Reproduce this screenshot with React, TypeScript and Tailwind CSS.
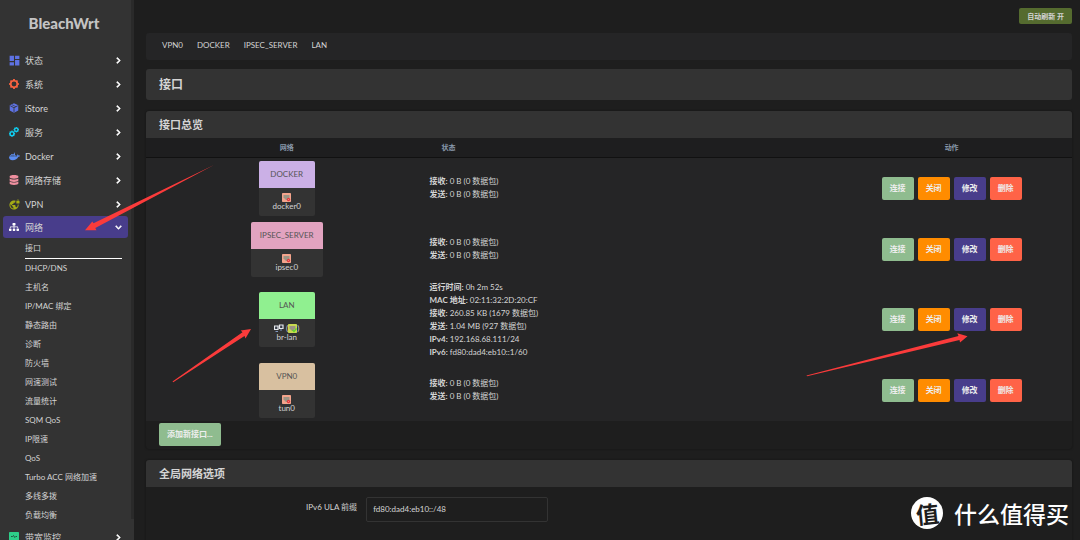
import React from "react";
import { MdDashboard, MdVpnLock } from "react-icons/md";
import { FaChevronDown, FaChevronRight, FaDatabase, FaDocker, FaSitemap } from "react-icons/fa";

function gearPath(cx: number, cy: number, outer: number, inner: number, teeth: number) {
  const step = (Math.PI * 2) / teeth;
  const points: string[] = [];
  for (let i = 0; i < teeth; i++) {
    const a = i * step - Math.PI / 2;
    const corners: [number, number][] = [
      [inner, a - step * 0.32],
      [outer, a - step * 0.2],
      [outer, a + step * 0.2],
      [inner, a + step * 0.32],
    ];
    for (const [r, t] of corners) {
      points.push(`${(cx + r * Math.cos(t)).toFixed(2)},${(cy + r * Math.sin(t)).toFixed(2)}`);
    }
  }
  return `M${points.join("L")}Z`;
}

function hole(cx: number, cy: number, r: number) {
  return `M${cx - r},${cy}a${r},${r} 0 1,0 ${r * 2},0a${r},${r} 0 1,0 ${-r * 2},0Z`;
}

function GearIcon() {
  return (
    <svg viewBox="0 0 20 20" className="size-[10px] text-[#fb6340]" fill="currentColor" aria-hidden="true">
      <path fillRule="evenodd" d={gearPath(10, 10, 10, 8.4, 8) + hole(10, 10, 4.9)} />
    </svg>
  );
}

function CubeIcon() {
  return (
    <svg viewBox="0 0 20 20" className="size-[10px]" aria-hidden="true">
      <path d="M10 0.500L18.500 4.500V15L10 19.500L1.500 15V4.500Z" fill="#5e72e4" />
      <path d="M2.500 5.500L10 9.500L17.500 5.500M10 9.500V18.500" fill="none" stroke="#333" strokeWidth="1.6" />
      <path d="M6 3.500L14 7.500" fill="none" stroke="#333" strokeWidth="1.2" />
    </svg>
  );
}

function GearsIcon() {
  return (
    <svg viewBox="0 0 20 20" className="size-[10px] text-[#11cdef]" fill="currentColor" aria-hidden="true">
      <path fillRule="evenodd" d={gearPath(6, 13.5, 6.4, 5.4, 8) + hole(6, 13.5, 2.4)} />
      <path fillRule="evenodd" d={gearPath(14.6, 5.4, 5.6, 4.7, 8) + hole(14.6, 5.4, 2)} />
    </svg>
  );
}

function MonitorIcon() {
  return (
    <svg viewBox="0 0 20 20" className="size-[10px]" aria-hidden="true">
      <rect width="20" height="20" rx="1.5" fill="#2dce89" />
      <path d="M4 9h3l2-2 2.5 4L13.500 9H16" fill="none" stroke="#1f4a3a" strokeWidth="1.8" />
    </svg>
  );
}

function PortIcon({ up = false }: { up?: boolean }) {
  return (
    <svg viewBox="0 0 18 18" className="size-[9px]" aria-hidden="true">
      <rect width="18" height="18" rx="1.5" fill={up ? "#c9d94f" : "#f4a48c"} />
      <path d="M3 4h12v6h-2v2h-2v2H7v-2H5v-2H3Z" fill="#9c9484" />
      {up ? (
        <path d="M9 12l3 3 5-6" fill="none" stroke="#5fd62a" strokeWidth="2.6" />
      ) : (
        <g>
          <circle cx="13" cy="13" r="3.4" fill="#e5383b" />
          <path d="M11.800 11.800l2.400 2.400m0-2.400l-2.400 2.400" stroke="#ffb0a8" strokeWidth="0.8" />
        </g>
      )}
    </svg>
  );
}

function BridgeIcon() {
  return (
    <svg viewBox="0 0 20 18" className="h-[9px] w-[10px]" aria-hidden="true">
      <path d="M1 4h7v7H1Z M11 2h7v7h-7Z" fill="#3a3f4a" stroke="#e6e9ee" strokeWidth="2.4" />
      <path d="M3 15h5M12 12h4" stroke="#7f97c0" strokeWidth="2.4" />
    </svg>
  );
}

const menu = [
  { label: "状态", icon: <MdDashboard className="size-[13px] shrink-0 text-[#5e72e4]" /> },
  { label: "系统", icon: <GearIcon /> },
  { label: "iStore", icon: <CubeIcon /> },
  { label: "服务", icon: <GearsIcon /> },
  { label: "Docker", icon: <FaDocker className="size-[11px] shrink-0 text-[#5c8df0]" /> },
  { label: "网络存储", icon: <FaDatabase className="size-[10px] text-[#ef8f9f]" /> },
  { label: "VPN", icon: <MdVpnLock className="size-[11px] shrink-0 text-[#a5ad15]" /> },
];

const submenu = [
  "接口",
  "DHCP/DNS",
  "主机名",
  "IP/MAC 绑定",
  "静态路由",
  "诊断",
  "防火墙",
  "网速测试",
  "流量统计",
  "SQM QoS",
  "IP限速",
  "QoS",
  "Turbo ACC 网络加速",
  "多线多拨",
  "负载均衡",
];

function MenuItem({ label, icon, open = false }: { label: string; icon: React.ReactNode; open?: boolean }) {
  return (
    <a
      href="#"
      className={
        open
          ? "mx-[3px] mb-px flex h-[22px] items-center rounded-[3px] bg-[#483d8b] px-[6px] text-[9px]"
          : "mx-[3px] flex h-6 items-center px-[6px] text-[9px]"
      }
    >
      <span className="flex w-4 items-center">
        <span className="flex w-[10px] justify-center">{icon}</span>
      </span>
      <span className="flex-1">{label}</span>
      <span className="flex w-2 justify-center text-white">
        {open ? (
          <FaChevronDown className="size-[7px] stroke-current [stroke-width:40]" />
        ) : (
          <FaChevronRight className="size-[7px] stroke-current [stroke-width:40]" />
        )}
      </span>
    </a>
  );
}

type Iface = { name: string; device: string; color: string; up?: boolean; stats: [string, string][] };

const idle: [string, string][] = [
  ["接收", "0 B (0 数据包)"],
  ["发送", "0 B (0 数据包)"],
];

const interfaces: Iface[] = [
  { name: "DOCKER", device: "docker0", color: "bg-[#cbb0e6]", stats: idle },
  { name: "IPSEC_SERVER", device: "ipsec0", color: "bg-[#e2a3c0]", stats: idle },
  {
    name: "LAN",
    device: "br-lan",
    color: "bg-[#90f090]",
    up: true,
    stats: [
      ["运行时间", "0h 2m 52s"],
      ["MAC 地址", "02:11:32:2D:20:CF"],
      ["接收", "260.85 KB (1679 数据包)"],
      ["发送", "1.04 MB (927 数据包)"],
      ["IPv4", "192.168.68.111/24"],
      ["IPv6", "fd80:dad4:eb10::1/60"],
    ],
  },
  { name: "VPN0", device: "tun0", color: "bg-[#d8c0a0]", stats: idle },
];

const actions = [
  { label: "连接", color: "bg-[#8fbc8f]" },
  { label: "关闭", color: "bg-[#ff8c00]" },
  { label: "修改", color: "bg-[#483d8b]" },
  { label: "删除", color: "bg-[#ff6347]" },
];

function IfaceCard({ iface }: { iface: Iface }) {
  return (
    <div className="mx-auto w-fit min-w-[56px] overflow-hidden rounded-[2px] bg-[#333] text-center">
      <div className={`flex h-[27px] items-center justify-center px-[9px] text-[#555] ${iface.color}`}>{iface.name}</div>
      <div className="flex h-7 flex-col items-center justify-center">
        <div className="flex h-[9px] items-center">
          {iface.up ? (
            <>
              <BridgeIcon />
              <span className="ml-[2px]">(</span>
              <PortIcon up />
              <span>)</span>
            </>
          ) : (
            <PortIcon />
          )}
        </div>
        <div className="leading-[9px]">{iface.device}</div>
      </div>
    </div>
  );
}

function Arrows() {
  return (
    <svg className="pointer-events-none absolute left-0 top-0 h-[540px] w-[1080px]" viewBox="0 0 1080 540" fill="#fb3b3b" aria-hidden="true">
      <path d="M214 165L93.500 223.200L92.300 221.500L85 230.300L96.500 230.300L95.300 228Z" />
      <path d="M172.500 381.500L242.500 332.300L240.700 330.500L251 329L245.500 338.500L244.500 336L173.200 382.200Z" />
      <path d="M806.500 375.500L958.500 336L957.300 333.300L967.500 336.300L960 342.500L959.500 340L807 376.300Z" />
    </svg>
  );
}

export default function App() {
  return (
    <div className="relative flex h-screen overflow-hidden bg-[#1e1e1e] font-['Lato','Noto_Sans_CJK_SC',sans-serif] text-[8px] leading-[13px] text-[#d4d4d4]">
      <aside className="relative w-[134px] shrink-0 overflow-hidden bg-[#333] pr-[3px]">
        <div className="flex h-12 items-center justify-center pb-[2px] pr-[3px] text-[15px] font-black text-[#c4c4c4]">
          BleachWrt
        </div>
        <nav>
          {menu.map((m) => (
            <MenuItem key={m.label} {...m} />
          ))}
          <MenuItem label="网络" icon={<FaSitemap className="size-[10px] text-white" />} open />
          <ul className="pl-[25px] pr-[9px]">
            {submenu.map((s, i) => (
              <li key={s}>
                <a
                  href="#"
                  className={i === 0 ? "flex h-5 items-center border-b border-white" : "flex h-[19px] items-center"}
                >
                  {s}
                </a>
              </li>
            ))}
          </ul>
          <MenuItem label="带宽监控" icon={<MonitorIcon />} />
        </nav>
        <div className="absolute right-0 top-0 h-[519px] w-[3px] bg-[#2a2a2a]" />
      </aside>

      <main className="min-w-0 flex-1 pl-3 pr-2">
        <div className="flex h-[33px] items-start justify-end pt-2">
          <button className="h-4 rounded-[2px] bg-[#556b2f] px-2 text-[7px] font-bold leading-4">自动刷新 开</button>
        </div>

        <nav className="flex h-[27px] gap-[14px] rounded-[3px] bg-[#252526] px-4 pt-[6px]">
          {["VPN0", "DOCKER", "IPSEC_SERVER", "LAN"].map((t) => (
            <a key={t} href="#">
              {t}
            </a>
          ))}
        </nav>

        <h2 className="mt-[9px] flex h-[31px] items-center rounded-[3px] bg-[#333] px-[13px] text-[12px] font-bold">接口</h2>

        <section className="mt-[11px] rounded-[3px] shadow-[0_0_2px_#111]">
          <h3 className="flex h-[27px] items-center rounded-t-[3px] bg-[#333] px-[13px] text-[11px] font-bold">接口总览</h3>
          <table className="w-full table-fixed border-collapse bg-[#252526]">
            <thead>
              <tr className="h-[19px] border-b border-[#111] bg-[#1e1e1f] text-[7px] text-[#8898aa]">
                <th className="w-[30.4%] font-bold">网络</th>
                <th className="pl-[14px] text-left font-bold">状态</th>
                <th className="w-[26%] font-bold">动作</th>
              </tr>
            </thead>
            <tbody>
              {interfaces.map((iface) => (
                <tr key={iface.name}>
                  <td className="py-[3px]">
                    <IfaceCard iface={iface} />
                  </td>
                  <td className="py-px pl-[2px]">
                    {iface.stats.map(([k, v]) => (
                      <div key={k}>
                        <strong>{k}:</strong> {v}
                      </div>
                    ))}
                  </td>
                  <td>
                    <div className="flex justify-center gap-1">
                      {actions.map((a) => (
                        <button key={a.label} className={`h-[23px] w-8 rounded-[2px] font-bold text-[#eee] ${a.color}`}>
                          {a.label}
                        </button>
                      ))}
                    </div>
                  </td>
                </tr>
              ))}
            </tbody>
          </table>
          <div className="px-[13px] pb-[3px] pt-[2px]">
            <button className="block h-[23px] rounded-[2px] bg-[#8fbc8f] px-2 font-bold text-[#eee]">添加新接口...</button>
          </div>
        </section>

        <section className="mt-[11px] h-screen rounded-[3px] shadow-[0_0_2px_#111]">
          <h3 className="flex h-[27px] items-center rounded-t-[3px] bg-[#333] px-[13px] text-[11px] font-bold">全局网络选项</h3>
          <div className="flex pt-[10px]">
            <label htmlFor="ula" className="w-[22.8%] pt-1 text-right">
              IPv6 ULA 前缀
            </label>
            <input
              id="ula"
              defaultValue="fd80:dad4:eb10::/48"
              className="ml-[9px] h-[25px] w-[182px] rounded-[2px] border border-[#333] bg-transparent px-[6px]"
            />
          </div>
        </section>
      </main>

      <Arrows />

      <div className="absolute bottom-[11px] right-[11px] flex items-center gap-[11px] font-['Noto_Sans_CJK_SC',sans-serif] text-[23px] font-medium leading-8 text-white">
        <span className="flex size-8 items-center justify-center rounded-full bg-white font-bold text-[#1e1e1e]">
          <span className="-rotate-6">值</span>
        </span>
        <span>什么值得买</span>
      </div>
    </div>
  );
}
